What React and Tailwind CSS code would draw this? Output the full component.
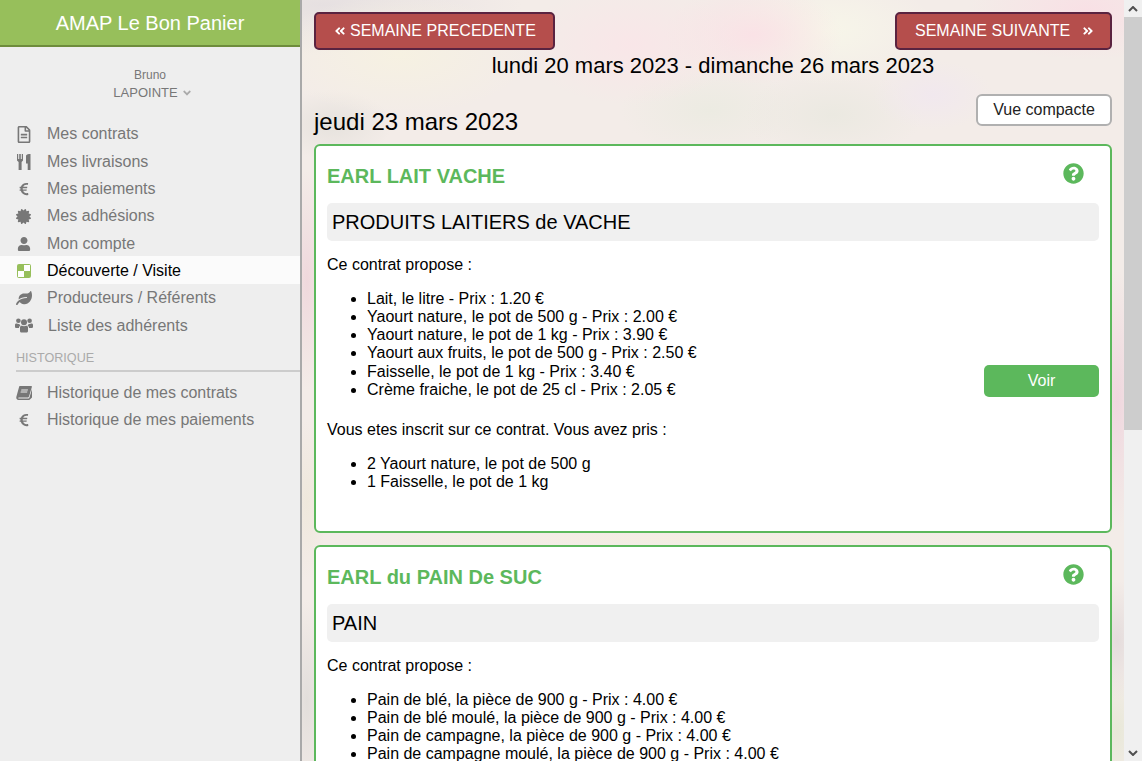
import {
  FaRegFileAlt,
  FaEuroSign,
  FaCertificate,
  FaUser,
  FaLeaf,
  FaQuestionCircle,
  FaAngleDoubleLeft,
  FaAngleDoubleRight,
  FaAngleDown,
} from "react-icons/fa";

const menu = [
  { label: "Mes contrats", icon: <FaRegFileAlt className="h-[17px] w-[14px]" /> },
  { label: "Mes livraisons", icon: <Cutlery /> },
  { label: "Mes paiements", icon: <FaEuroSign className="text-[14px]" /> },
  { label: "Mes adhésions", icon: <FaCertificate className="text-[15px]" /> },
  { label: "Mon compte", icon: <FaUser className="text-[14px]" /> },
  { label: "Découverte / Visite", icon: <Checker />, active: true },
  { label: "Producteurs / Référents", icon: <FaLeaf className="text-[16px]" /> },
  { label: "Liste des adhérents", icon: <Users />, wide: true },
];

const history = [
  { label: "Historique de mes contrats", icon: <Book /> },
  { label: "Historique de mes paiements", icon: <FaEuroSign className="text-[14px]" /> },
];

const cards = [
  {
    producer: "EARL LAIT VACHE",
    product: "PRODUITS LAITIERS de VACHE",
    items: [
      "Lait, le litre - Prix : 1.20 €",
      "Yaourt nature, le pot de 500 g - Prix : 2.00 €",
      "Yaourt nature, le pot de 1 kg - Prix : 3.90 €",
      "Yaourt aux fruits, le pot de 500 g - Prix : 2.50 €",
      "Faisselle, le pot de 1 kg - Prix : 3.40 €",
      "Crème fraiche, le pot de 25 cl - Prix : 2.05 €",
    ],
    taken: ["2 Yaourt nature, le pot de 500 g", "1 Faisselle, le pot de 1 kg"],
  },
  {
    producer: "EARL du PAIN De SUC",
    product: "PAIN",
    items: [
      "Pain de blé, la pièce de 900 g - Prix : 4.00 €",
      "Pain de blé moulé, la pièce de 900 g - Prix : 4.00 €",
      "Pain de campagne, la pièce de 900 g - Prix : 4.00 €",
      "Pain de campagne moulé, la pièce de 900 g - Prix : 4.00 €",
    ],
    taken: [],
  },
];

function Checker() {
  return (
    <svg width="14" height="14" viewBox="0 0 14 14">
      <rect width="14" height="14" rx="2" fill="#97bf5b" />
      <rect x="7" y="1" width="6" height="6" fill="#ffffff" />
      <rect x="1" y="7" width="6" height="6" fill="#ffffff" />
    </svg>
  );
}

function Cutlery() {
  return (
    <svg width="14" height="16" viewBox="0 0 14 16" fill="currentColor">
      <path d="M0 0h1.2v5h1V0h1.6v5h1V0H6v6.6L4.6 8v8H1.6V8L0 6.6Z" />
      <path d="M9 9.5V2c0-1 1.2-2 3-2h1.5v16h-2.8V9.5Z" />
    </svg>
  );
}

function Users() {
  return (
    <svg width="18" height="15" viewBox="0 0 18 15" fill="currentColor">
      <circle cx="9" cy="4.2" r="3" />
      <circle cx="3.4" cy="2.8" r="2.3" />
      <circle cx="14.6" cy="2.8" r="2.3" />
      <path d="M5 9.5C5 8.2 6 7.6 7 7.8c1.2.6 2.8.6 4 0 1-.2 2 .4 2 1.7V13c0 1-.8 1.6-1.8 1.6H6.8C5.8 14.6 5 14 5 13Z" />
      <path d="M0 7c0-1 .8-1.6 1.6-1.4.8.4 1.6.5 2.8.4.3 1 .9 1.4 1.2 1.6C4.6 8 4 8.8 4 10H1.4C.6 10 0 9.6 0 8.8Z" />
      <path d="M18 7c0-1-.8-1.6-1.6-1.4-.8.4-1.6.5-2.8.4-.3 1-.9 1.4-1.2 1.6 1 .4 1.6 1.2 1.6 2.4h2.6c.8 0 1.4-.4 1.4-1.2Z" />
    </svg>
  );
}

function Book() {
  return (
    <svg width="16" height="14" viewBox="0 0 16 14" fill="currentColor">
      <path d="M4 0h11c.8 0 1 .6.8 1.2L13 10.6c-.2.6-.6.9-1.2.9H3c-1 0-1.2.8-.2.9h9.7c.4 0 .8-.2.9-.6L16 3v8.6l-1.8 1.7c-.3.4-.8.7-1.4.7H2.6C1 14 0 12.6.3 11L3 1.2C3.2.4 3.4 0 4 0Z" />
      <path d="M5.4 3.4h6.6l-.3 1H5.1ZM4.8 5.6h6.6l-.3 1H4.5Z" fill="#eeeeee" />
    </svg>
  );
}

function MenuItem({ item }) {
  return (
    <div
      className={`flex h-[27.3px] items-center pt-[1.6px] pl-4 text-[16px] ${
        item.active ? "bg-[#fbfbfb] text-black" : "text-[#777777]"
      }`}
    >
      <span className={`flex w-[15px] shrink-0 items-center justify-center text-[#777777] ${item.wide ? "mr-[17px]" : "mr-4"}`}>
        <span className="shrink-0">{item.icon}</span>
      </span>
      {item.label}
    </div>
  );
}

function Sidebar() {
  return (
    <aside className="w-[302px] shrink-0 border-r-2 border-[#a9a9a9] bg-[#eeeeee]">
      <div className="flex h-[47px] items-center justify-center border-b-2 border-[#6e8c3c] bg-[#97bf5b] text-[20px] text-white">
        AMAP Le Bon Panier
      </div>
      <div className="pt-5 text-center text-[#777777]">
        <div className="text-[12px] leading-[17px]">Bruno</div>
        <div className="flex items-center justify-center gap-[3px] pl-[6px] text-[13px] leading-[17px]">
          LAPOINTE <FaAngleDown className="text-[12px] text-[#aaaaaa]" />
        </div>
      </div>
      <nav className="mt-[19px]">
        {menu.map((item) => (
          <MenuItem key={item.label} item={item} />
        ))}
      </nav>
      <div className="mt-[10px] ml-4 border-b-2 border-[#cccccc] pb-[2px] text-[12.6px] leading-[20px] text-[#aaaaaa]">
        HISTORIQUE
      </div>
      <div className="mt-[6px]">
        {history.map((item) => (
          <MenuItem key={item.label} item={item} />
        ))}
      </div>
    </aside>
  );
}

function ContractCard({ card }) {
  return (
    <section className="mb-3 rounded-[6px] border-2 border-[#5cb85c] bg-white px-[11px] pt-[11px] pb-10 text-[16px] leading-[18.2px] text-black">
      <div className="flex h-9 items-center justify-between">
        <h2 className="pt-[2px] text-[20px] font-bold text-[#5cb85c]">{card.producer}</h2>
        <FaQuestionCircle className="mr-[15px] mb-[3px] text-[21px] text-[#5cb85c]" />
      </div>
      <div className="mt-[10px] flex h-[38px] items-center rounded-[5px] bg-[#f0f0f0] px-[5px] text-[20px]">
        {card.product}
      </div>
      <p className="mt-[15px]">Ce contrat propose :</p>
      <div className="mt-[15.6px] flex items-end justify-between">
        <ul className="list-disc pl-10">
          {card.items.map((text) => (
            <li key={text}>{text}</li>
          ))}
        </ul>
        {card.taken.length > 0 && (
          <button className="mb-[2px] h-8 w-[115px] rounded-[5px] bg-[#5cb85c] text-white">Voir</button>
        )}
      </div>
      {card.taken.length > 0 && (
        <>
          <p className="mt-[22.4px]">Vous etes inscrit sur ce contrat. Vous avez pris :</p>
          <ul className="mt-[15px] list-disc pl-10">
            {card.taken.map((text) => (
              <li key={text}>{text}</li>
            ))}
          </ul>
        </>
      )}
    </section>
  );
}

function Scrollbar() {
  return (
    <div className="flex w-[18px] shrink-0 flex-col bg-[#f0f0f0] text-[#505050]">
      <div className="flex h-[17px] items-center justify-center">
        <svg width="10" height="6" viewBox="0 0 10 6" fill="none" stroke="currentColor" strokeWidth="2">
          <path d="M1 5l4-4 4 4" />
        </svg>
      </div>
      <div className="h-[413px] bg-[#cdcdcd]" />
      <div className="flex-1" />
      <div className="flex h-[17px] items-center justify-center">
        <svg width="10" height="6" viewBox="0 0 10 6" fill="none" stroke="currentColor" strokeWidth="2">
          <path d="M1 1l4 4 4-4" />
        </svg>
      </div>
    </div>
  );
}

export default function App() {
  return (
    <div className="flex h-screen overflow-hidden font-['Liberation_Sans',Arial,sans-serif]">
      <Sidebar />
      <main className="min-w-0 flex-1 overflow-hidden bg-[#f3ece8] bg-[radial-gradient(ellipse_130px_60px_at_98px_55px,#f6f1e2,transparent),radial-gradient(ellipse_110px_60px_at_330px_45px,#f9e6e8,transparent),radial-gradient(ellipse_90px_50px_at_451px_35px,#fae2e6,transparent),radial-gradient(ellipse_110px_55px_at_525px_30px,#f7f6e9,transparent),radial-gradient(ellipse_120px_50px_at_785px_10px,#f8e0e5,transparent),radial-gradient(ellipse_60px_35px_at_631px_95px,#f1e8ee,transparent),radial-gradient(ellipse_90px_45px_at_531px_115px,#ebe9e1,transparent),radial-gradient(ellipse_90px_45px_at_408px_110px,#ecebe2,transparent),radial-gradient(ellipse_60px_35px_at_30px_125px,#e6e2dd,transparent),radial-gradient(ellipse_200px_50px_at_20px_5px,#e6e0e1,transparent),radial-gradient(ellipse_25px_130px_at_815px_400px,#efd6de,transparent),radial-gradient(ellipse_25px_60px_at_815px_640px,#e4dcdc,transparent),radial-gradient(ellipse_25px_60px_at_815px_730px,#e8e8d8,transparent),radial-gradient(ellipse_20px_110px_at_5px_280px,#efd8dc,transparent),radial-gradient(ellipse_20px_100px_at_5px_700px,#e2dedb,transparent),radial-gradient(ellipse_20px_80px_at_5px_500px,#efe8dc,transparent),radial-gradient(ellipse_400px_8px_at_400px_539px,#f4eee2,transparent)] px-3 pt-3">
        <div className="flex justify-between">
          <button className="flex h-[38px] w-[241px] items-center gap-1 rounded-[5px] border-2 border-[#5a2340] bg-[#b54e4c] pl-[18px] text-[16px] text-white">
            <FaAngleDoubleLeft className="text-[12px]" /> SEMAINE PRECEDENTE
          </button>
          <button className="flex h-[38px] w-[217px] items-center gap-3 rounded-[5px] border-2 border-[#5a2340] bg-[#b54e4c] pl-[18px] text-[16px] text-white">
            SEMAINE SUIVANTE <FaAngleDoubleRight className="text-[12px]" />
          </button>
        </div>
        <h1 className="mt-[1px] text-center text-[22px] leading-[30px] text-black">
          lundi 20 mars 2023 - dimanche 26 mars 2023
        </h1>
        <div className="mt-[13px] mb-2 flex h-[42px] justify-between">
          <h2 className="mt-[14px] text-[24px] leading-[27px] text-black">jeudi 23 mars 2023</h2>
          <button className="h-8 w-[136px] rounded-[6px] border-2 border-[#b0b0b0] bg-white text-[16px] text-[#222222]">
            Vue compacte
          </button>
        </div>
        {cards.map((card) => (
          <ContractCard key={card.producer} card={card} />
        ))}
      </main>
      <Scrollbar />
    </div>
  );
}
